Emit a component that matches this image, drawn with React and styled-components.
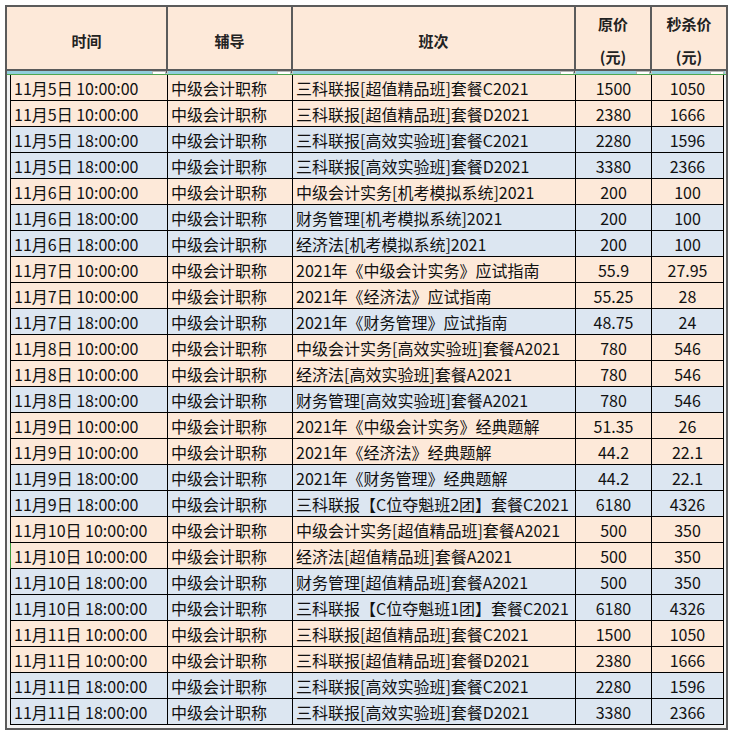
import React from 'react';
import styled, { createGlobalStyle } from 'styled-components';

const GlobalStyle = createGlobalStyle`
  * { box-sizing: border-box; }
  body {
    margin: 0;
    background: #fff;
    font-family: "Noto Sans CJK SC", "Noto Sans", sans-serif;
    color: #000;
  }
`;

const PEACH = '#FDE9D9';
const BLUE = '#DCE6F1';

const Sheet = styled.div`
  margin: 5px 0 0 5px;
  width: 723px;
  border: 2px solid #5b5b5b;
  background: #f3f3f3;
`;

const HeaderRow = styled.div`
  display: grid;
  grid-template-columns: 161px 125px 283px 76px 74px;
  height: 64px;
  background: ${PEACH};
  border-bottom: 2px solid #5b5b5b;
`;

const HeaderCell = styled.div`
  display: flex;
  flex-direction: column;
  align-items: center;
  justify-content: center;
  font-size: 15px;
  font-weight: 700;
  line-height: 33px;
  color: #222;
  border-right: ${p => (p.last ? 'none' : '2px solid #5b5b5b')};
`;

const Strip = styled.div`
  display: grid;
  grid-template-columns: 161px 125px 283px 76px 74px;
  height: 3px;
  background: #92cddc;
`;

const StripCell = styled.div`
  position: relative;
  border-right: 1px solid #c9c9c9;
`;

const FilterTab = styled.span`
  position: absolute;
  right: 1px;
  top: 0;
  width: 14px;
  height: 3px;
  background: #fff;
  border: 1px solid #b5b5b5;
  border-bottom: none;
`;

const Body = styled.div`
  padding: 0 2px 3px 3px;
  border-top: 1px solid #4fa64f;
`;

const Row = styled.div`
  display: grid;
  grid-template-columns: 157px 125px 283px 76px 72px;
  height: 26px;
  background: ${p => (p.tone === 'blue' ? BLUE : PEACH)};
  border-left: 1px solid ${p => (p.marked ? '#3a9a3a' : '#000')};
  border-bottom: 1px solid #000;
`;

const Cell = styled.div`
  display: flex;
  align-items: center;
  justify-content: ${p => (p.center ? 'center' : 'flex-start')};
  padding-left: ${p => (p.center ? '0' : '3px')};
  font-size: 16px;
  white-space: nowrap;
  overflow: hidden;
  border-right: 1px solid #000;
  color: #111;
`;

const rows = [
  ['11月5日 10:00:00', '三科联报[超值精品班]套餐C2021', '1500', '1050'],
  ['11月5日 10:00:00', '三科联报[超值精品班]套餐D2021', '2380', '1666'],
  ['11月5日 18:00:00', '三科联报[高效实验班]套餐C2021', '2280', '1596'],
  ['11月5日 18:00:00', '三科联报[高效实验班]套餐D2021', '3380', '2366'],
  ['11月6日 10:00:00', '中级会计实务[机考模拟系统]2021', '200', '100'],
  ['11月6日 18:00:00', '财务管理[机考模拟系统]2021', '200', '100'],
  ['11月6日 18:00:00', '经济法[机考模拟系统]2021', '200', '100'],
  ['11月7日 10:00:00', '2021年《中级会计实务》应试指南', '55.9', '27.95'],
  ['11月7日 10:00:00', '2021年《经济法》应试指南', '55.25', '28'],
  ['11月7日 18:00:00', '2021年《财务管理》应试指南', '48.75', '24'],
  ['11月8日 10:00:00', '中级会计实务[高效实验班]套餐A2021', '780', '546'],
  ['11月8日 10:00:00', '经济法[高效实验班]套餐A2021', '780', '546'],
  ['11月8日 18:00:00', '财务管理[高效实验班]套餐A2021', '780', '546'],
  ['11月9日 10:00:00', '2021年《中级会计实务》经典题解', '51.35', '26'],
  ['11月9日 10:00:00', '2021年《经济法》经典题解', '44.2', '22.1'],
  ['11月9日 18:00:00', '2021年《财务管理》经典题解', '44.2', '22.1'],
  ['11月9日 18:00:00', '三科联报【C位夺魁班2团】套餐C2021', '6180', '4326'],
  ['11月10日 10:00:00', '中级会计实务[超值精品班]套餐A2021', '500', '350'],
  ['11月10日 10:00:00', '经济法[超值精品班]套餐A2021', '500', '350'],
  ['11月10日 18:00:00', '财务管理[超值精品班]套餐A2021', '500', '350'],
  ['11月10日 18:00:00', '三科联报【C位夺魁班1团】套餐C2021', '6180', '4326'],
  ['11月11日 10:00:00', '三科联报[超值精品班]套餐C2021', '1500', '1050'],
  ['11月11日 10:00:00', '三科联报[超值精品班]套餐D2021', '2380', '1666'],
  ['11月11日 18:00:00', '三科联报[高效实验班]套餐C2021', '2280', '1596'],
  ['11月11日 18:00:00', '三科联报[高效实验班]套餐D2021', '3380', '2366'],
];

const App = () => (
  <>
    <GlobalStyle />
    <Sheet>
      <HeaderRow>
        <HeaderCell>时间</HeaderCell>
        <HeaderCell>辅导</HeaderCell>
        <HeaderCell>班次</HeaderCell>
        <HeaderCell>
          <span>原价</span>
          <span>(元)</span>
        </HeaderCell>
        <HeaderCell last>
          <span>秒杀价</span>
          <span>(元)</span>
        </HeaderCell>
      </HeaderRow>
      <Strip>
        {[0, 1, 2, 3, 4].map(i => (
          <StripCell key={i}>
            <FilterTab />
          </StripCell>
        ))}
      </Strip>
      <Body>
        {rows.map(([time, name, price, sale], i) => (
          <Row
            key={i}
            tone={time.includes('18:00') ? 'blue' : 'peach'}
            marked={i === 18}
          >
            <Cell>{time}</Cell>
            <Cell>中级会计职称</Cell>
            <Cell>{name}</Cell>
            <Cell center>{price}</Cell>
            <Cell center>{sale}</Cell>
          </Row>
        ))}
      </Body>
    </Sheet>
  </>
);

export default App;
